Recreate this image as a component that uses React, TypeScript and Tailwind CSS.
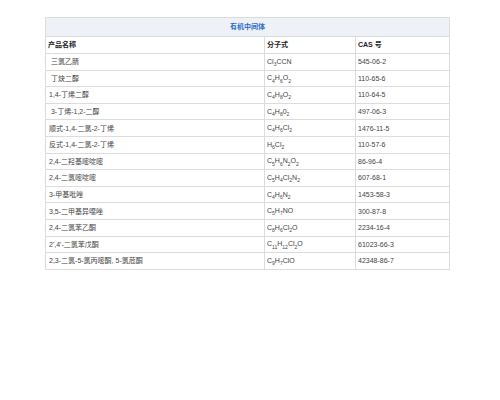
import React from 'react'

type Row = { name: string; formula: React.ReactNode; cas: string }

const S = ({ children }: { children: React.ReactNode }) => (
  <sub className="text-[5px] align-[-1px] leading-none">{children}</sub>
)

const ROWS: Row[] = [
  { name: ' 三氯乙腈', formula: <>Cl<S>3</S>CCN</>, cas: '545-06-2' },
  { name: ' 丁炔二醇', formula: <>C<S>4</S>H<S>6</S>O<S>2</S></>, cas: '110-65-6' },
  { name: '1,4-丁烯二醇', formula: <>C<S>4</S>H<S>8</S>O<S>2</S></>, cas: '110-64-5' },
  { name: ' 3-丁烯-1,2-二醇', formula: <>C<S>4</S>H<S>8</S>0<S>2</S></>, cas: '497-06-3' },
  { name: '顺式-1,4-二氯-2-丁烯', formula: <>C<S>4</S>H<S>6</S>Cl<S>2</S></>, cas: '1476-11-5' },
  { name: '反式-1,4-二氯-2-丁烯', formula: <>H<S>6</S>Cl<S>2</S></>, cas: '110-57-6' },
  { name: '2,4-二羟基嘧啶嘧', formula: <>C<S>5</S>H<S>6</S>N<S>2</S>O<S>2</S></>, cas: '86-96-4' },
  { name: '2,4-二氯嘧啶嘧', formula: <>C<S>5</S>H<S>4</S>Cl<S>2</S>N<S>2</S></>, cas: '607-68-1' },
  { name: '3-甲基吡唑', formula: <>C<S>4</S>H<S>6</S>N<S>2</S></>, cas: '1453-58-3' },
  { name: '3,5-二甲基异噁唑', formula: <>C<S>5</S>H<S>7</S>NO</>, cas: '300-87-8' },
  { name: '2,4-二氯苯乙酮', formula: <>C<S>8</S>H<S>6</S>Cl<S>2</S>O</>, cas: '2234-16-4' },
  { name: '2\',4\'-二氯苯戊酮', formula: <>C<S>11</S>H<S>12</S>Cl<S>2</S>O</>, cas: '61023-66-3' },
  { name: '2,3-二氯-5-氯丙嘧酮, 5-氯苊酮', formula: <>C<S>9</S>H<S>7</S>ClO</>, cas: '42348-86-7' },
]

export default function App() {
  return (
    <div className="w-[500px] h-[400px] bg-white pt-[17px] pl-[45px] font-['Liberation_Sans','Noto_Sans_CJK_SC',sans-serif]">
      <table className="w-[404px] table-fixed border-collapse text-[7px] text-[#444]">
        <colgroup>
          <col className="w-[219px]" />
          <col className="w-[91px]" />
          <col className="w-[94px]" />
        </colgroup>
        <thead>
          <tr className="h-[19px] bg-[#eef1f5]">
            <th colSpan={3} className="border border-[#dcdcdc] text-center font-bold text-[#2a6ac8]">
              有机中间体
            </th>
          </tr>
          <tr className="h-[17px]">
            <th className="border border-[#dcdcdc] pl-[2px] text-left font-bold text-[#222]">产品名称</th>
            <th className="border border-[#dcdcdc] pl-[2px] text-left font-bold text-[#222]">分子式</th>
            <th className="border border-[#dcdcdc] pl-[2px] text-left font-bold text-[#222]">CAS 号</th>
          </tr>
        </thead>
        <tbody>
          {ROWS.map((r) => (
            <tr key={r.cas} className="h-[16.6px]">
              <td className="border border-[#dcdcdc] pl-[3px] whitespace-pre leading-none">{r.name}</td>
              <td className="border border-[#dcdcdc] pl-[2px] leading-none">{r.formula}</td>
              <td className="border border-[#dcdcdc] pl-[2px] leading-none">{r.cas}</td>
            </tr>
          ))}
        </tbody>
      </table>
    </div>
  )
}
